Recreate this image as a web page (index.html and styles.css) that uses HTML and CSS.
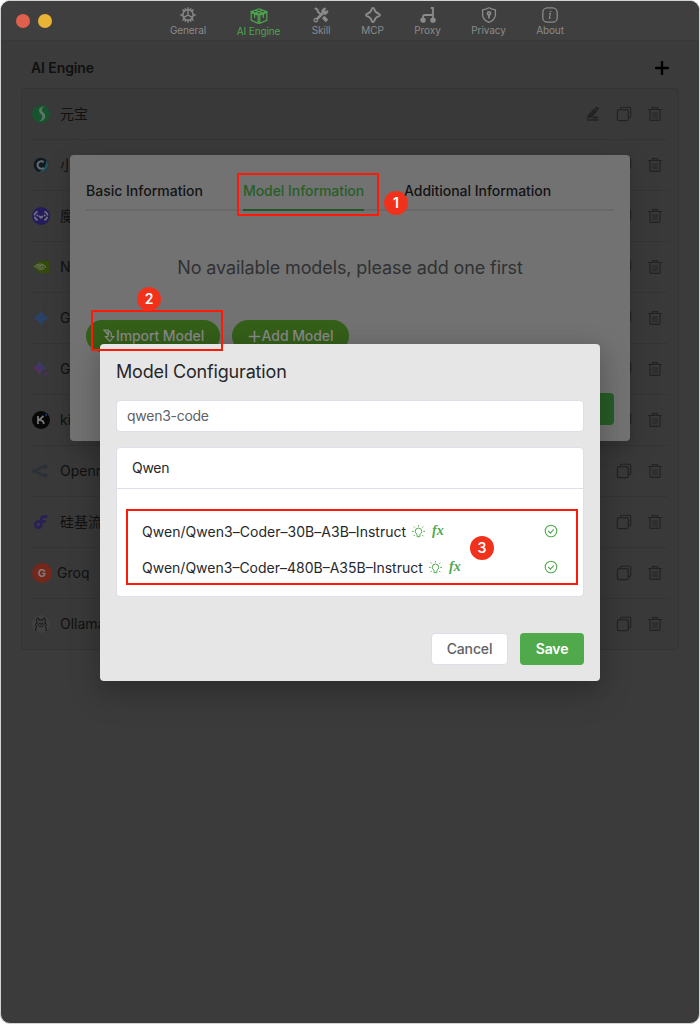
FILE: index.html
```
<!DOCTYPE html>
<html lang="en">
<head>
<meta charset="utf-8">
<title>AI Engine</title>
<link rel="stylesheet" href="styles.css">
</head>
<body>
<svg class="defs" xmlns="http://www.w3.org/2000/svg">
  <symbol id="edit" viewBox="0 0 16 16"><path d="M3 8.8 9.2 2.6 12.4 5.5 6 11.7 1.5 12.6Z" fill="currentColor"/><path d="M10 2.3 11.2 1.1Q12 .5 12.8 1.2L13.6 2Q14.2 2.8 13.5 3.6L12.4 4.7ZM8.4 10.5H12.8V12.4H6.7Z" fill="currentColor"/><path d="M2 14H13.5" stroke="currentColor" stroke-width="1.3"/></symbol>
  <symbol id="copy" viewBox="0 0 16 16"><path d="M4.5 3.5V2.6Q4.5 1.3 5.8 1.3H13.4Q14.7 1.3 14.7 2.6V10.3Q14.7 11.6 13.4 11.6H12.5" fill="none" stroke="currentColor" stroke-width="1.1"/><rect x="1.4" y="3.7" width="10.9" height="11" rx="1.7" fill="none" stroke="currentColor" stroke-width="1.2"/></symbol>
  <symbol id="trash" viewBox="0 0 16 16"><rect x="5" y="6" width="6" height="6.5" fill="currentColor" opacity=".45"/><path d="M1 3.5H15M3 3.8V13.4Q3 14.4 4 14.4H12Q13 14.4 13 13.4V3.8M5 3.4 5.6 1.6H10.4L11 3.4" fill="none" stroke="currentColor" stroke-width="1.2"/></symbol>
  <symbol id="bulb" viewBox="0 0 12 12"><path d="M4.7 8.6Q3 7.6 3 5.8A3 3 0 0 1 9 5.8Q9 7.6 7.3 8.6V10.8H4.7ZM6 0V1.3M1.5 1.4 2.5 2.4M10.5 1.4 9.5 2.4M0 5.9H1.6M10.4 5.9H12M1.5 10.3 2.6 9.2M10.5 10.3 9.4 9.2"/></symbol>
  <symbol id="check" viewBox="0 0 14 14"><circle cx="7" cy="7" r="5.8"/><path d="M4.2 7 6.4 9.1 9.8 5.3"/></symbol>
</svg>
<div class="window">
  <header class="titlebar">
    <div class="lights"><i class="light red"></i><i class="light amber"></i></div>
    <nav class="nav">
      <div class="nav-item general"><svg viewBox="0 0 16 16"><circle cx="8" cy="8" r="5.2" stroke-width="1.5"/><path d="M8 .2V3M8 13V15.8M.2 8H3M13 8H15.8M2.5 2.5 4.3 4.3M11.7 11.7 13.5 13.5M13.5 2.5 11.7 4.3M4.3 11.7 2.5 13.5M4.9 1.2 5.6 3M10.4 13 11.1 14.8M11.1 1.2 10.4 3M5.6 13 4.9 14.8M8 3V8M8 8 3.8 10.4M8 8 12.2 10.4"/></svg><span>General</span></div>
      <div class="nav-item engine active"><svg viewBox="0 0 18 16"><path d="M9 .8 16.5 3.6 9 6.4 1.5 3.6ZM1.2 4.4V12.3L8.2 15.3V7.2ZM16.8 4.4V12.3L9.8 15.3V7.2ZM5.3 2.2 12.7 5M12.7 2.2 5.3 5M4.6 6V9.8M13.4 6V9.8"/></svg><span>AI Engine</span></div>
      <div class="nav-item skill"><svg viewBox="0 0 16 16"><path d="M1.8 1.2 4.5 2.7 4.8 4.4 8 7.6" stroke-width="2"/><path d="M10.2 10 14 14" stroke-width="3.4"/><path d="M2.3 13.7 10.5 5.5" stroke-width="2.6"/><path d="M13 1.2A3.2 3.2 0 1 0 15 3.5L12.8 4.3 11.7 3.2Z" fill="currentColor" stroke-width=".6"/><circle cx="2.8" cy="13.2" r="1.7" fill="#3f3f3f"/></svg><span>Skill</span></div>
      <div class="nav-item mcp"><svg viewBox="0 0 16 16"><path d="M8 1Q9 1 9.2 2Q10.2 5.8 14 6.8Q15 7.1 15 8Q15 8.9 14 9.2Q10.2 10.2 9.2 14Q9 15 8 15Q7 15 6.8 14Q5.8 10.2 2 9.2Q1 8.9 1 8Q1 7.1 2 6.8Q5.8 5.8 6.8 2Q7 1 8 1Z" stroke-width="1.8"/></svg><span>MCP</span></div>
      <div class="nav-item proxy"><svg viewBox="0 0 16 16"><path d="M10.8 1H13V6Q13 8 11 8H5Q3 8 3 10V13M13 7V13" stroke-width="1.8"/><circle cx="3" cy="13.2" r="2" fill="currentColor"/><circle cx="13" cy="13.2" r="2" fill="currentColor"/><path d="M.8 12.5H5.3M10.8 12.5H15.4"/></svg><span>Proxy</span></div>
      <div class="nav-item privacy"><svg viewBox="0 0 16 16"><path d="M8 .8Q11 2.6 14.4 2.8V8Q14.2 12.8 8 15.3Q1.8 12.8 1.6 8V2.8Q5 2.6 8 .8Z"/><circle cx="8" cy="6.4" r="1.5" stroke-width="1.7"/><path d="M8 8V11.5" stroke-width="1.8"/></svg><span>Privacy</span></div>
      <div class="nav-item about"><svg viewBox="0 0 16 16"><rect x=".8" y=".8" width="14.4" height="14.4" rx="4.5"/><path d="M7 6.5H8.3L7.4 11.3H8.8" stroke-width="1.1"/><circle cx="8.7" cy="4.4" r=".5" fill="currentColor" stroke-width=".6"/></svg><span>About</span></div>
    </nav>
  </header>
  <main class="page">
    <div class="page-head"><h1>AI Engine</h1><svg class="plus" viewBox="0 0 14 14"><path d="M7 1V13M1 7H13"/></svg></div>
    <div class="list">
      <div class="row"><svg class="logo" viewBox="0 0 18 18"><circle cx="9" cy="9" r="9" fill="#17532f"/><path d="M10.7 1.5C5.8 3 6.4 7 9 9C11.5 11 10 15 6.7 16.7C14 16 14.7 10 11.3 7.6C9 6 9.2 3 12.4 1.6Z" fill="#597665"/></svg><span>元宝</span><div class="acts"><svg><use href="#edit"/></svg><svg><use href="#copy"/></svg><svg><use href="#trash"/></svg></div></div>
      <div class="row"><svg class="logo" viewBox="0 0 18 18"><circle cx="9" cy="9" r="7.3" fill="#10191e"/><path d="M14.4 4.2A7.3 7.3 0 0 1 7 16Q13.5 13.5 14.4 4.2Z" fill="#204f59"/><path d="M11.7 6.2A3.7 3.7 0 1 0 11.8 11.7" fill="none" stroke="#606770" stroke-width="2.2"/></svg><span>小米</span><div class="acts"><svg><use href="#copy"/></svg><svg><use href="#trash"/></svg></div></div>
      <div class="row"><svg class="logo" viewBox="0 0 18 18"><circle cx="9" cy="9" r="9" fill="#241d5c"/><path d="M5.8 5H4.3L2.5 7.3V8.5M12.2 5H13.7L15.5 7.3V8.5M2.5 9.7 4.3 12.6H5.9M15.5 9.7 13.7 12.6H12.1M5.3 7.4V9.2M12.7 7.4V9.2M7 8.9 9 10.9 11 8.9" fill="none" stroke="#74727f" stroke-width="1.7"/></svg><span>魔搭</span><div class="acts"><svg><use href="#copy"/></svg><svg><use href="#trash"/></svg></div></div>
      <div class="row"><svg class="logo" viewBox="0 0 18 18"><path d="M6 3H17V15H6V12.5Q2.2 12 .4 8.8Q2.4 5.5 6 5Z" fill="#344c0b"/><path d="M2 9Q8 3 14 8.7Q8.5 14.5 4.2 9Q8 5.8 11.4 8.8Q8.6 11.5 6.5 9.2L8.8 8.8" fill="none" stroke="#6c7560" stroke-width="1"/></svg><span>Nvidia</span><div class="acts"><svg><use href="#copy"/></svg><svg><use href="#trash"/></svg></div></div>
      <div class="row"><svg class="logo" viewBox="0 0 18 18"><path d="M9 1Q11 7 17 9Q11 11 9 17Q7 11 1 9Q7 7 9 1Z" fill="#2a4267"/></svg><span>Gemini</span><div class="acts"><svg><use href="#copy"/></svg><svg><use href="#trash"/></svg></div></div>
      <div class="row"><svg class="logo" viewBox="0 0 18 18"><path d="M7.3.6Q9.2 6.2 14.6 8Q9.2 9.8 7.3 15.4Q5.4 9.8 0 8Q5.4 6.2 7.3.6Z" fill="url(#spark)"/><path d="M14 11.2Q14.8 13.2 16.8 14Q14.8 14.8 14 16.8Q13.2 14.8 11.2 14Q13.2 13.2 14 11.2Z" fill="#493258"/><linearGradient id="spark" x1="0" y1="1" x2="1" y2="0"><stop stop-color="#6c2b3c"/><stop offset=".5" stop-color="#443468"/><stop offset="1" stop-color="#244866"/></linearGradient></svg><span>Google</span><div class="acts"><svg><use href="#copy"/></svg><svg><use href="#trash"/></svg></div></div>
      <div class="row"><svg class="logo" viewBox="0 0 18 18"><circle cx="9" cy="9" r="9" fill="#080808"/><path d="M6 5V13M11.5 5 7 9.2Q11.7 8.8 11.8 13" fill="none" stroke="#777" stroke-width="1.8"/><circle cx="14" cy="4" r="1.2" fill="#172e65"/></svg><span>kimi</span><div class="acts"><svg><use href="#copy"/></svg><svg><use href="#trash"/></svg></div></div>
      <div class="row"><svg class="logo" viewBox="0 0 18 18"><path d="M0 9H2.5C6 9 8 4.6 11.5 4.6H14M2.5 9C6 9 8 13.4 11.5 13.4H14" fill="none" stroke="#2b3137" stroke-width="2.8"/><path d="M12.5 1.8 17.3 4.6 12.5 7.4ZM12.5 10.6 17.3 13.4 12.5 16.2Z" fill="#2b3137"/></svg><span>Openrouter</span><div class="acts"><svg><use href="#copy"/></svg><svg><use href="#trash"/></svg></div></div>
      <div class="row"><svg class="logo" viewBox="0 0 18 18"><path d="M9.3 11.2A3 3 0 1 1 6.5 8.7H14M9.3 12V6.5Q9.3 3.6 12 3.6H15.4" fill="none" stroke="#292056" stroke-width="2.8"/></svg><span>硅基流动</span><div class="acts"><svg><use href="#copy"/></svg><svg><use href="#trash"/></svg></div></div>
      <div class="row groq"><i class="g-logo">G</i><span>Groq</span><div class="acts"><svg><use href="#copy"/></svg><svg><use href="#trash"/></svg></div></div>
      <div class="row"><svg class="logo" viewBox="0 0 18 18"><circle cx="9" cy="9" r="9" fill="#404040"/><path d="M4.2 16Q2.8 14.3 4.5 12.2Q2.6 10 4.7 7.6L4.7 4Q5.2 1.4 7 3.8V5.2Q9 4.4 11 5.2V3.8Q12.8 1.4 13.3 4V7.6Q15.4 10 13.5 12.2Q15.2 14.3 13.8 16" fill="none" stroke="#151515" stroke-width="1"/><ellipse cx="9" cy="9.8" rx="2.6" ry="1.8" fill="none" stroke="#151515" stroke-width=".8"/><path d="M8.5 9.5H9.5M5.5 8.6H6.2M11.8 8.6H12.5" stroke="#151515"/></svg><span>Ollama</span><div class="acts"><svg><use href="#copy"/></svg><svg><use href="#trash"/></svg></div></div>
    </div>
  </main>

  <section class="dialog info">
    <div class="tabs"><div class="tab t1">Basic Information</div><div class="tab t2 on">Model Information</div><div class="tab t3">Additional Information</div></div>
    <p class="empty">No available models, please add one first</p>
    <div class="pills">
      <button class="pill import"><svg viewBox="0 0 12 14"><path d="M1 1H5L8.2 4V7.5H11L6.8 12.3 2.5 7.5H5V5.5ZM5 1 5.5 5 2.7 3"/></svg><span>Import Model</span></button>
      <button class="pill add"><svg viewBox="0 0 14 14"><path d="M7 .8V13.2M.8 7H13.2" stroke-width="1.7"/></svg><span>Add Model</span></button>
    </div>
    <div class="info-foot"><button class="btn dim">Save</button></div>
  </section>

  <section class="dialog config">
    <h2>Model Configuration</h2>
    <div class="input">qwen3-code</div>
    <div class="card">
      <div class="card-head">Qwen</div>
      <div class="models">
        <div class="model"><span class="m1">Qwen/Qwen3–Coder–30B–A3B–Instruct</span><svg class="bulb"><use href="#bulb"/></svg><em>fx</em><svg class="check"><use href="#check"/></svg></div>
        <div class="model"><span class="m2">Qwen/Qwen3–Coder–480B–A35B–Instruct</span><svg class="bulb"><use href="#bulb"/></svg><em>fx</em><svg class="check"><use href="#check"/></svg></div>
      </div>
    </div>
    <div class="foot"><button class="btn cancel">Cancel</button><button class="btn save">Save</button></div>
  </section>

  <div class="mark box-a"></div><div class="mark box-b"></div><div class="mark box-c"></div>
  <b class="num n1">1</b><b class="num n2">2</b><b class="num n3">3</b>
</div>
</body>
</html>
```
FILE: styles.css
```
* { box-sizing: border-box; }
body { margin: 0; background: #fff; font-family: Inter, "Noto Sans CJK SC", sans-serif; font-size: 14px; }
h1, h2, p { margin: 0; font-weight: 400; }
button { font: inherit; border: 0; padding: 0; }
svg { display: block; flex: none; }
.defs { position: absolute; width: 0; height: 0; }

.window { position: relative; width: 700px; height: 1024px; overflow: hidden; background: #3b3b3b; border: 1px solid #d0d4d2; border-radius: 10px; }

.titlebar { display: flex; height: 40px; background: #3f3f3f; border-bottom: 1px solid #383838; }
.lights { display: flex; gap: 8px; width: 169.5px; padding: 13px 0 0 15px; }
.light { width: 14px; height: 14px; border-radius: 50%; }
.light.red { background: #e0604e; }
.light.amber { background: #e9b336; }
.nav { display: flex; gap: 31px; padding-top: 6px; color: #8b8b8b; font-size: 10px; line-height: 14px; }
.nav-item { display: flex; flex-direction: column; align-items: center; white-space: nowrap; letter-spacing: -.1px; }
.nav-item svg { width: 16px; height: 16px; fill: none; stroke: currentColor; stroke-width: 1.3; }
.nav-item.active { color: #4ca64c; padding-top: 1px; }
.nav-item.active svg { width: 18px; stroke-width: 1.2; }
.general { width: 35px; }
.engine { width: 44px; }
.skill { width: 19px; }
.mcp { width: 22px; }
.proxy { width: 26px; }
.privacy { width: 34px; }
.about { width: 27px; }

.page { padding: 0 20px; }
.page-head { display: flex; justify-content: space-between; align-items: center; height: 47px; padding: 6px 10px 0; }
.page-head h1 { font-size: 14px; font-weight: 600; color: #101010; letter-spacing: -.1px; }
.plus { width: 14px; height: 14px; stroke: #000; stroke-width: 2.4; stroke-linecap: round; }
.list { border: 1px solid #343434; border-radius: 4px; background: #393939; padding: 0 10px; height: 562px; }
.row { display: flex; align-items: center; height: 51px; gap: 10px; border-bottom: 1px solid #343434; color: #111; }
.row > span { padding-bottom: 2px; }
.row > svg, .row > .acts { margin-bottom: 1px; }
.row:last-child { border-bottom: 0; }
.logo { width: 18px; height: 18px; }
.row.groq { gap: 5px; }
.g-logo { width: 20px; height: 20px; margin-bottom: 1px; border-radius: 50%; background: #74271a; color: #817b79; font-size: 11px; font-weight: 700; font-style: normal; line-height: 20px; text-align: center; }
.acts { display: flex; gap: 15px; margin-left: auto; padding-right: 5px; color: #232323; }
.acts svg { width: 16px; height: 16px; }

.dialog { position: absolute; border-radius: 4px; box-shadow: 0 12px 32px rgba(0, 0, 0, .12), 0 4px 12px rgba(0, 0, 0, .08); padding: 16px; }
.info { left: 69px; top: 154px; width: 560px; height: 286px; background: #727272; }
.tabs { display: flex; gap: 40px; height: 40px; border-bottom: 2px solid #696969; font-weight: 500; line-height: 40px; color: #131313; white-space: nowrap; }
.tab { height: 40px; }
.t1 { width: 117px; }
.t2 { width: 121px; letter-spacing: -.06px; }
.t3 { width: 147px; letter-spacing: -.03px; }
.tab.on { color: #275f27; border-bottom: 2px solid #235723; }
.empty { margin-top: 44px; text-align: center; font-size: 18px; line-height: 26px; letter-spacing: -.11px; color: #303133; white-space: nowrap; }
.pills { display: flex; gap: 12px; margin-top: 39px; }
.pill { display: flex; align-items: center; justify-content: center; gap: 1px; height: 32px; border-radius: 16px; background: #345f19; color: #898989; font-weight: 500; letter-spacing: -.08px; white-space: nowrap; }
.pill span { padding-bottom: 1px; }
.pill svg { fill: none; stroke: currentColor; stroke-width: 1.2; }
.import { width: 134px; padding-left: 1px; }
.import svg { width: 12px; height: 14px; }
.add { width: 117px; }
.add svg { width: 13px; height: 13px; }
.info-foot { display: flex; justify-content: flex-end; margin-top: 41px; }
.btn { height: 32px; width: 64px; border-radius: 4px; font-weight: 500; padding-bottom: 2px; }
.dim { background: #265d26; color: #777; }

.config { left: 99px; top: 343px; width: 500px; height: 337px; padding-top: 17px; background: #e6e6e6; box-shadow: 0 12px 32px 4px rgba(0, 0, 0, .14), 0 4px 20px rgba(0, 0, 0, .12); }
.config h2 { font-size: 18px; line-height: 22px; letter-spacing: -.17px; color: #26272a; white-space: nowrap; }
.input { height: 32px; margin-top: 17px; padding: 0 10px; border: 1px solid #dcdfe6; border-radius: 4px; background: #fff; color: #606266; line-height: 30px; letter-spacing: -.27px; }
.card { height: 150px; margin-top: 15px; border: 1px solid #dde0ea; border-radius: 4px; background: #fff; color: #27282b; }
.card-head { height: 41px; padding-left: 15px; line-height: 40px; letter-spacing: -.3px; border-bottom: 1px solid #dde0ea; }
.models { padding: 24px 25px 0; }
.model { display: flex; align-items: center; height: 36px; color: #27282b; white-space: nowrap; }
.m1 { width: 266px; letter-spacing: .03px; }
.m2 { width: 283px; }
.bulb { width: 13px; height: 13px; margin-left: 4px; fill: none; stroke: #50aa4c; stroke-width: .9; }
.model em { margin-left: 7px; color: #50aa4c; font: italic bold 14px/14px "Liberation Serif", serif; }
.check { width: 14px; height: 14px; margin-left: auto; fill: none; stroke: #50aa4c; stroke-width: 1.1; }
.foot { display: flex; justify-content: flex-end; gap: 12px; margin-top: 36px; }
.cancel { width: 77px; background: #fff; border: 1px solid #dcdfe6; color: #606266; letter-spacing: -.15px; }
.save { background: #50aa4c; color: #fff; font-weight: 600; letter-spacing: -.1px; }

.mark { position: absolute; border: 2px solid #ff1a08; }
.box-a { left: 236px; top: 172px; width: 142px; height: 43px; }
.box-b { left: 90px; top: 309px; width: 132px; height: 41px; }
.box-c { left: 125px; top: 508px; width: 452px; height: 76px; }
.num { position: absolute; width: 24px; height: 24px; border-radius: 50%; background: #f0321c; color: #fff; font-size: 14px; font-weight: 600; line-height: 23px; text-align: center; }
.n1 { left: 383px; top: 190px; }
.n2 { left: 136px; top: 286px; }
.n3 { left: 469px; top: 535px; }
```
